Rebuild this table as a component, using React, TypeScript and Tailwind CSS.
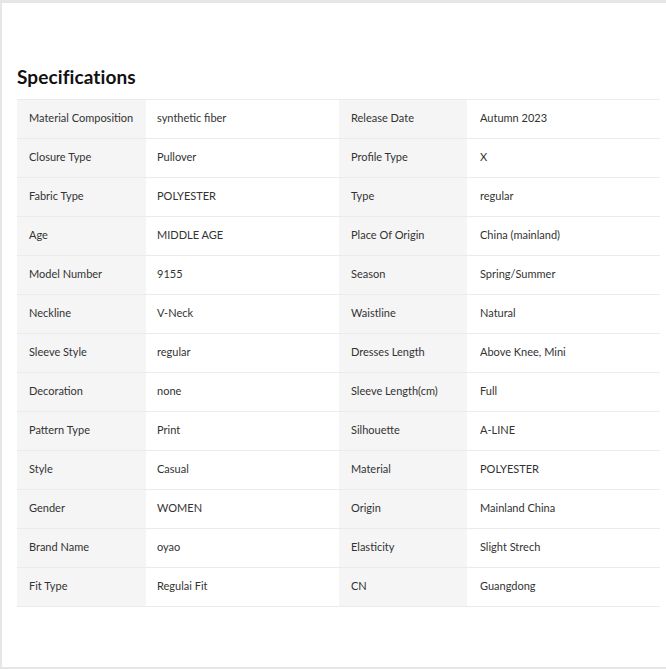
const specs: [string, string, string, string][] = [
  ["Material Composition", "synthetic fiber", "Release Date", "Autumn 2023"],
  ["Closure Type", "Pullover", "Profile Type", "X"],
  ["Fabric Type", "POLYESTER", "Type", "regular"],
  ["Age", "MIDDLE AGE", "Place Of Origin", "China (mainland)"],
  ["Model Number", "9155", "Season", "Spring/Summer"],
  ["Neckline", "V-Neck", "Waistline", "Natural"],
  ["Sleeve Style", "regular", "Dresses Length", "Above Knee, Mini"],
  ["Decoration", "none", "Sleeve Length(cm)", "Full"],
  ["Pattern Type", "Print", "Silhouette", "A-LINE"],
  ["Style", "Casual", "Material", "POLYESTER"],
  ["Gender", "WOMEN", "Origin", "Mainland China"],
  ["Brand Name", "oyao", "Elasticity", "Slight Strech"],
  ["Fit Type", "Regulai Fit", "CN", "Guangdong"],
];

export default function App() {
  return (
    <div className="h-[669px] w-[666px] bg-[#e6e6e6] pt-[3px] pb-[2px] pl-[2px] font-['Lato',sans-serif]">
      <div className="h-full bg-white pl-[15px] pr-[4px] pt-[62px]">
        <h2 className="mb-[10px] text-[19px] font-bold leading-[24px] tracking-[0.1px] text-[#111]">Specifications</h2>
        <div className="w-[643px] border-t border-[#ebebeb] text-[11px] text-[#333]">
          {specs.map(([l1, v1, l2, v2]) => (
            <div key={l1} className="grid grid-cols-[129px_193px_128px_193px] border-b border-[#ebebeb]">
              <div className="flex h-[38px] items-center bg-[#f5f5f5] px-3 pb-[2px]">{l1}</div>
              <div className="flex h-[38px] items-center px-[11px] pb-[2px]">{v1}</div>
              <div className="flex h-[38px] items-center bg-[#f5f5f5] px-3 pb-[2px]">{l2}</div>
              <div className="flex h-[38px] items-center px-[13px] pb-[2px]">{v2}</div>
            </div>
          ))}
        </div>
      </div>
    </div>
  );
}
